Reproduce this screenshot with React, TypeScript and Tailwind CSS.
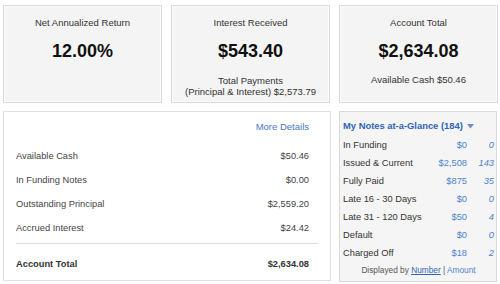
import type { ReactNode } from 'react'

const summary = [
    { label: 'Available Cash', value: '$50.46' },
    { label: 'In Funding Notes', value: '$0.00' },
    { label: 'Outstanding Principal', value: '$2,559.20' },
    { label: 'Accrued Interest', value: '$24.42' },
]

const glance = [
    { label: 'In Funding', amount: '$0', count: '0' },
    { label: 'Issued & Current', amount: '$2,508', count: '143' },
    { label: 'Fully Paid', amount: '$875', count: '35' },
    { label: 'Late 16 - 30 Days', amount: '$0', count: '0' },
    { label: 'Late 31 - 120 Days', amount: '$50', count: '4' },
    { label: 'Default', amount: '$0', count: '0' },
    { label: 'Charged Off', amount: '$18', count: '2' },
]

function StatCard({ title, value, children }: { title: string; value: string; children?: ReactNode }) {
    return (
        <div className="w-[159px] h-[98px] border border-[#dadada] bg-[#f4f4f4] shadow-[inset_0_0_0_1px_#fbfbfb] flex flex-col items-center pt-[11px]">
            <p className="text-[9.5px] leading-[12px] text-[#333]">{title}</p>
            <p className="mt-[11px] text-[18px] leading-[22px] font-bold text-[#111]">{value}</p>
            {children}
        </div>
    )
}

export default function App() {
    return (
        <div className="w-[500px] h-[284px] bg-white pl-[3px] pt-[5px] font-['Liberation_Sans',Arial,sans-serif] text-[#333]">
            <div className="flex gap-[9px]">
                <StatCard title="Net Annualized Return" value="12.00%" />
                <StatCard title="Interest Received" value="$543.40">
                    <div className="mt-[13px] text-center text-[9.5px] leading-[11px]">
                        <p>Total Payments</p>
                        <p>(Principal &amp; Interest) $2,573.79</p>
                    </div>
                </StatCard>
                <StatCard title="Account Total" value="$2,634.08">
                    <p className="mt-[12px] text-[9.5px] leading-[11px]">Available Cash $50.46</p>
                </StatCard>
            </div>

            <div className="flex gap-[8px] mt-[8px]">
                {/* account summary */}
                <div className="w-[328px] h-[170px] border border-[#e0e0e0] bg-white px-[12px]">
                    <div className="mt-[9px] h-[12px] flex justify-end pr-[9px] text-[9.5px] leading-[12px] text-[#4a78c2]">
                        More Details
                    </div>
                    <div className="mt-[12px]">
                        {summary.map((row) => (
                            <div key={row.label} className="h-[24px] flex items-center justify-between pr-[9px] text-[9.3px] text-[#444]">
                                <span>{row.label}</span>
                                <span>{row.value}</span>
                            </div>
                        ))}
                    </div>
                    <div className="mt-[2px] border-t border-[#dcdcdc]" />
                    <div className="mt-[9px] h-[24px] flex items-center justify-between pr-[9px] text-[9.3px] font-bold text-[#333]">
                        <span>Account Total</span>
                        <span>$2,634.08</span>
                    </div>
                </div>

                {/* notes at a glance */}
                <div className="w-[158px] h-[171px] border border-[#dadada] bg-[#f5f5f5] pl-[3px] pr-[2px]">
                    <div className="mt-[8px] h-[12px] flex items-center gap-[4px] text-[9.4px] leading-[12px] font-bold text-[#2f64b4]">
                        <span>My Notes at-a-Glance (184)</span>
                        <svg width="7" height="5" viewBox="0 0 7 5" className="mt-[1px]">
                            <path d="M0 0h7L3.5 4.5z" fill="#6d8fc4" />
                        </svg>
                    </div>
                    <div className="mt-[5px]">
                        {glance.map((row) => (
                            <div key={row.label} className="h-[18px] flex items-center text-[9.3px]">
                                <span className="flex-1 text-[#333]">{row.label}</span>
                                <span className="text-[#4f82cc]">{row.amount}</span>
                                <span className="w-[27px] text-right italic text-[#4f82cc]">{row.count}</span>
                            </div>
                        ))}
                    </div>
                    <p className="mt-[2px] text-center text-[8.3px] leading-[11px] text-[#555]">
                        Displayed by <span className="underline text-[#2f64b4]">Number</span> | <span className="text-[#4f82cc]">Amount</span>
                    </p>
                </div>
            </div>
        </div>
    )
}
